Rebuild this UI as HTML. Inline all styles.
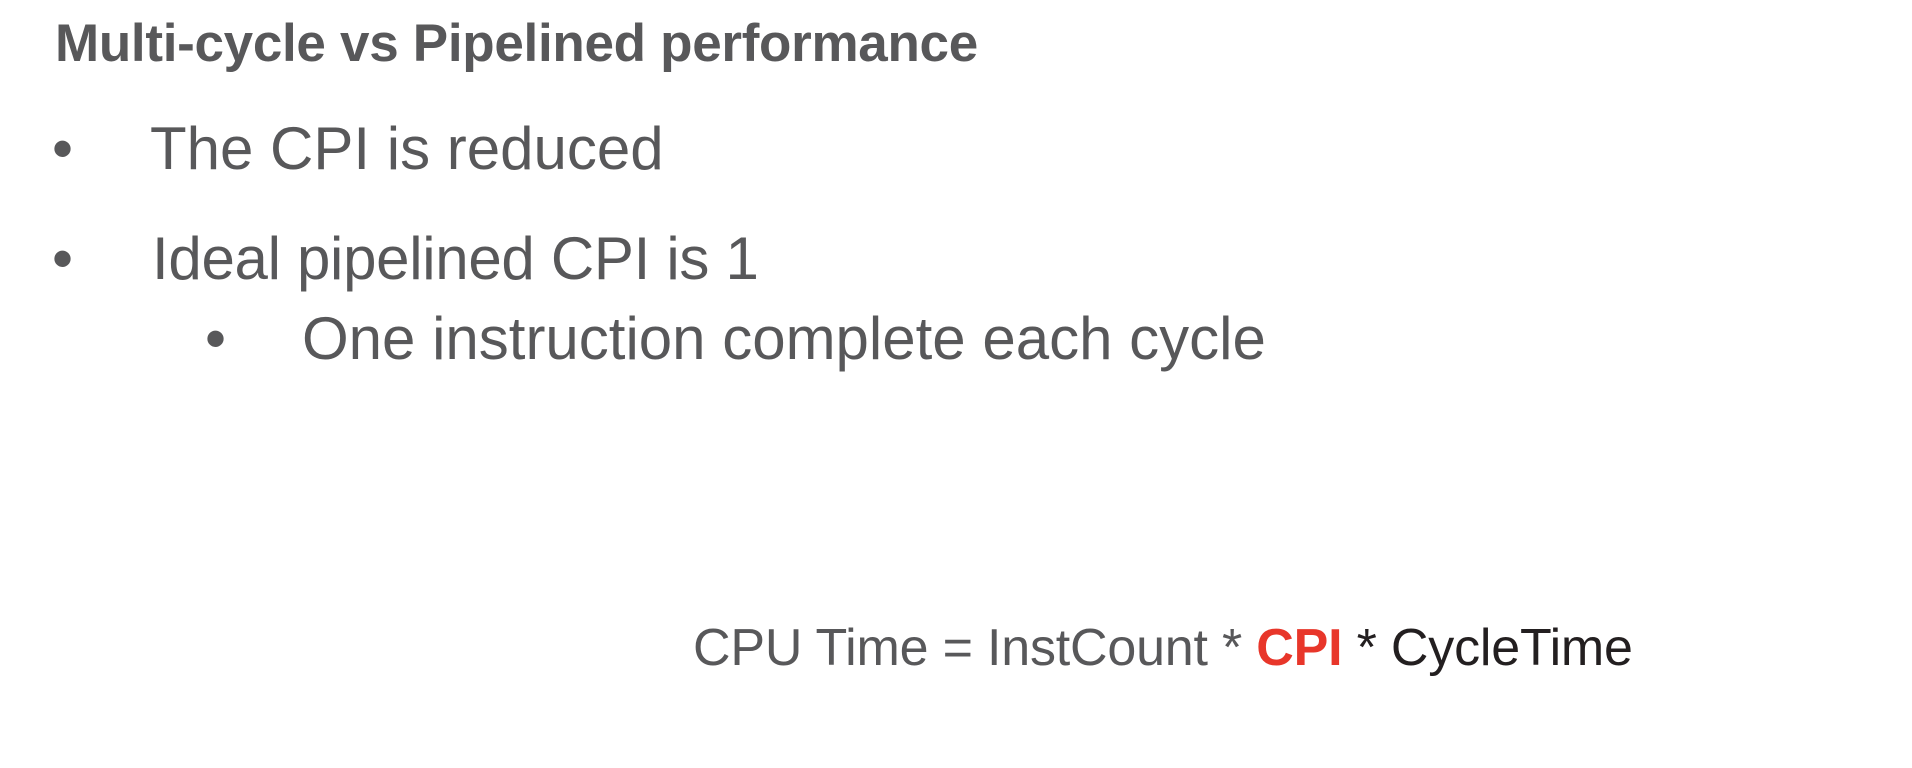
<!DOCTYPE html>
<html><head><meta charset="utf-8"><style>
html,body{margin:0;padding:0;background:#fff;width:1912px;height:768px;overflow:hidden;position:relative}
div{position:absolute;white-space:nowrap;font-family:"Liberation Sans",sans-serif;color:#58585a;line-height:1}
.t{left:55px;top:17px;font-size:53px;font-weight:bold;letter-spacing:-0.3px}
.b{font-size:60px}
.f{font-size:52px;left:693px;top:622px;letter-spacing:-0.2px}
</style></head><body>
<div class="t">Multi-cycle vs Pipelined performance</div>
<div class="b" style="left:52px;top:119px">•</div>
<div class="b" style="left:150px;top:119px">The CPI is reduced</div>
<div class="b" style="left:52px;top:229px">•</div>
<div class="b" style="left:152px;top:229px;letter-spacing:-0.3px">Ideal pipelined CPI is 1</div>
<div class="b" style="left:205px;top:309px">•</div>
<div class="b" style="left:302px;top:309px">One instruction complete each cycle</div>
<div class="f">CPU Time = InstCount * <b style="color:#e8362a">CPI</b> <span style="color:#231f20">* CycleTime</span></div>
</body></html>
